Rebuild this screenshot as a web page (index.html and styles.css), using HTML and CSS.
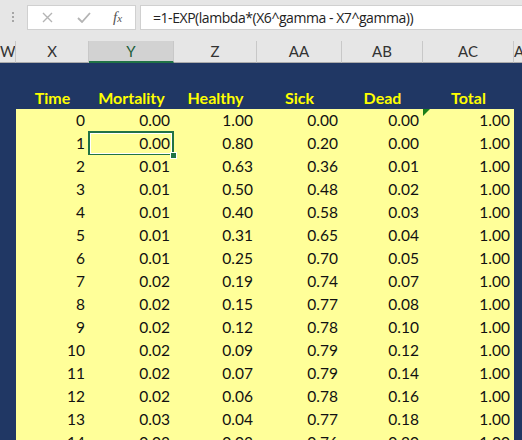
FILE: index.html
```html
<!DOCTYPE html>
<html lang="en">
<head>
  <meta charset="UTF-8">
  <title>Markov model</title>
  <link rel="stylesheet" href="styles.css">
</head>
<body>
  <div class="formula-bar">
    <div class="grip">
      <svg width="3" height="11" viewBox="0 0 3 11"><rect x="0" y="0" width="2" height="2" fill="#a6a6a6"/><rect x="0" y="4" width="2" height="2" fill="#a6a6a6"/><rect x="0" y="8" width="2" height="2" fill="#a6a6a6"/></svg>
    </div>
    <div class="fx-box">
      <svg class="ico-x" width="11" height="11" viewBox="0 0 11 11"><path d="M1 1 L10 10 M10 1 L1 10" stroke="#b4b4b4" stroke-width="1.4"/></svg>
      <svg class="ico-ok" width="14" height="11" viewBox="0 0 14 11"><path d="M1 6 L5 10 L13 1" stroke="#b4b4b4" stroke-width="1.8" fill="none"/></svg>
      <span class="fx"><i>f</i><small>x</small></span>
    </div>
    <div class="formula">=1-EXP(lambda*(X6^gamma - X7^gamma))</div>
  </div>

  <div class="colheads">
    <div class="ch">W</div>
    <div class="ch">X</div>
    <div class="ch active">Y</div>
    <div class="ch">Z</div>
    <div class="ch">AA</div>
    <div class="ch">AB</div>
    <div class="ch">AC</div>
    <div class="ch edge">A</div>
  </div>

  <div class="sheet" id="sheet">
    <div class="row"></div>
    <div class="row head">
      <div></div>
      <div>Time</div>
      <div>Mortality</div>
      <div>Healthy</div>
      <div>Sick</div>
      <div>Dead</div>
      <div>Total</div>
      <div></div>
    </div>
  </div>

  <script>
    var dane = [
      ["0", "0.00", "1.00", "0.00", "0.00", "1.00"],
      ["1", "0.00", "0.80", "0.20", "0.00", "1.00"],
      ["2", "0.01", "0.63", "0.36", "0.01", "1.00"],
      ["3", "0.01", "0.50", "0.48", "0.02", "1.00"],
      ["4", "0.01", "0.40", "0.58", "0.03", "1.00"],
      ["5", "0.01", "0.31", "0.65", "0.04", "1.00"],
      ["6", "0.01", "0.25", "0.70", "0.05", "1.00"],
      ["7", "0.02", "0.19", "0.74", "0.07", "1.00"],
      ["8", "0.02", "0.15", "0.77", "0.08", "1.00"],
      ["9", "0.02", "0.12", "0.78", "0.10", "1.00"],
      ["10", "0.02", "0.09", "0.79", "0.12", "1.00"],
      ["11", "0.02", "0.07", "0.79", "0.14", "1.00"],
      ["12", "0.02", "0.06", "0.78", "0.16", "1.00"],
      ["13", "0.03", "0.04", "0.77", "0.18", "1.00"],
      ["14", "0.03", "0.03", "0.76", "0.20", "1.00"]
    ];
    var sheet = document.getElementById("sheet");
    dane.forEach(function (wiersz, r) {
      var row = document.createElement("div");
      row.className = "row data";
      row.appendChild(document.createElement("div"));
      wiersz.forEach(function (v, c) {
        var cell = document.createElement("div");
        cell.className = "cell";
        if (r === 1 && c === 1) cell.className += " sel";
        if (r === 0 && c === 5) cell.className += " err";
        cell.textContent = v;
        row.appendChild(cell);
      });
      row.appendChild(document.createElement("div"));
      sheet.appendChild(row);
    });
  </script>
</body>
</html>
```
FILE: styles.css
```css
body {
  margin: 0;
  background: #e6e6e6;
  font-family: Lato, "Liberation Sans", sans-serif;
  overflow: hidden;
  width: 522px;
  height: 440px;
}

/* formula bar */
.formula-bar {
  display: flex;
  align-items: flex-start;
  height: 41px;
  padding-top: 5px;
  box-sizing: border-box;
}
.grip {
  width: 27px;
  height: 25px;
  display: flex;
  align-items: center;
  justify-content: center;
}
.fx-box {
  width: 109px;
  height: 25px;
  box-sizing: border-box;
  background: #fff;
  border: 1px solid #d0d0d0;
  display: flex;
  align-items: center;
}
.ico-x {
  margin-left: 14px;
}
.ico-ok {
  margin-left: 24px;
}
.fx {
  margin-left: 22px;
  font-family: "Liberation Serif", serif;
  color: #555;
  font-size: 15px;
}
.fx small {
  font-size: 11px;
  font-style: italic;
}
.formula {
  flex: 1;
  margin-left: 4px;
  height: 25px;
  box-sizing: border-box;
  background: #fff;
  border: 1px solid #d0d0d0;
  border-right: none;
  padding-left: 12px;
  font-family: "Open Sans", sans-serif;
  font-size: 14px;
  letter-spacing: -0.45px;
  line-height: 23px;
  color: #222;
  white-space: nowrap;
  overflow: hidden;
}

/* column letters */
.colheads,
.row {
  display: grid;
  grid-template-columns: 16px 73px 85px 83px 85px 81px 91px 8px;
}
.colheads {
  height: 22px;
}
.ch {
  box-sizing: border-box;
  border-right: 1px solid #c8c8c8;
  border-bottom: 1px solid #ababab;
  font-size: 15px;
  color: #333;
  text-align: center;
  line-height: 21px;
  overflow: hidden;
  white-space: nowrap;
}
.ch:first-child {
  text-align: right;
  padding-right: 1px;
}
.ch.edge {
  text-align: left;
  border-right: none;
}
.ch.active {
  background: #d2d2d2;
  border-bottom: 2px solid #217346;
  color: #1d5e3a;
}

/* sheet */
.sheet {
  background: #203764;
  height: 377px;
}
.row {
  height: 23px;
  line-height: 23px;
}
.head div {
  color: #ffff00;
  font-weight: bold;
  font-size: 16px;
  text-align: center;
}
.cell {
  background: #ffff99;
  text-align: right;
  padding-right: 4px;
  font-size: 15.5px;
  color: #111;
  position: relative;
}
.sel::after {
  content: "";
  position: absolute;
  left: -1px;
  top: -1px;
  right: 0;
  bottom: -1px;
  border: 2px solid #217346;
  box-shadow: inset 0 0 0 1px #fff;
}
.sel::before {
  content: "";
  position: absolute;
  right: -3px;
  bottom: -4px;
  width: 5px;
  height: 5px;
  background: #217346;
  border: 1px solid #fff;
  z-index: 1;
}
.err::before {
  content: "";
  position: absolute;
  left: 0;
  top: 0;
  border-top: 7px solid #1a7f1a;
  border-right: 7px solid transparent;
}
```
